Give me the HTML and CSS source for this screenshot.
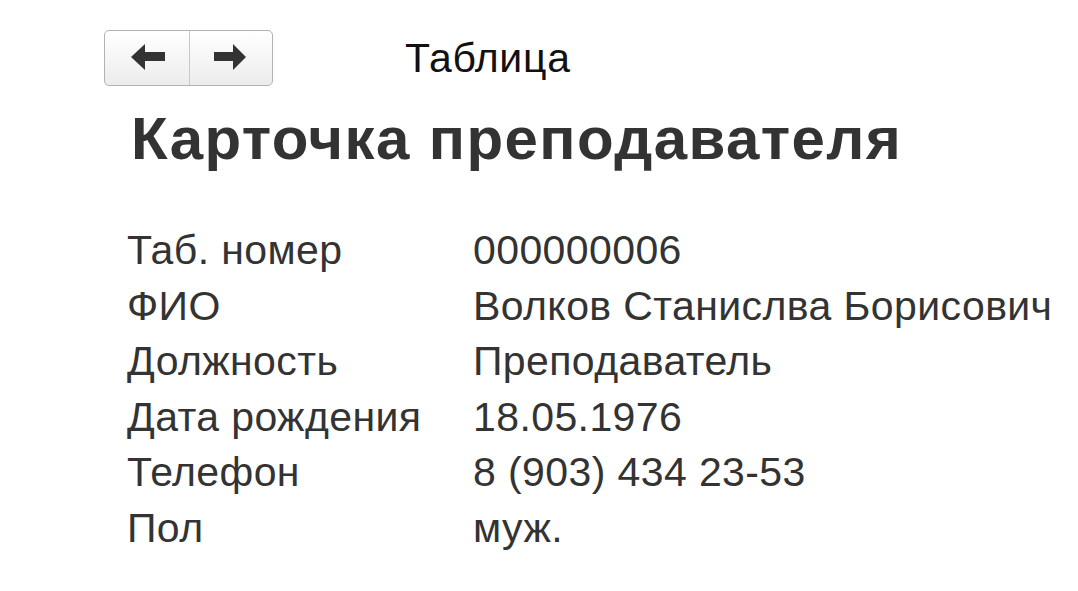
FILE: index.html
```html
<!DOCTYPE html>
<html lang="ru">
<head>
<meta charset="utf-8">
<title>Карточка преподавателя</title>
<link rel="stylesheet" href="styles.css">
</head>
<body>
<div class="page">
  <div class="toolbar">
    <div class="nav-group">
      <button class="nav-btn nav-back" type="button" aria-label="Назад">
        <svg width="34" height="26" viewBox="0 0 34 26"><path d="M0 13 L14 0 L14 8 L34 8 L34 17 L14 17 L14 26 Z" fill="#333"/></svg>
      </button>
      <button class="nav-btn nav-fwd" type="button" aria-label="Вперёд">
        <svg width="32" height="26" viewBox="0 0 32 26"><path d="M32 13 L19 0 L19 8 L0 8 L0 17 L19 17 L19 26 Z" fill="#333"/></svg>
      </button>
    </div>
    <div class="crumb">Таблица</div>
  </div>
  <h1 class="title">Карточка преподавателя</h1>
  <div class="card">
    <div class="label">Таб. номер</div><div class="value">000000006</div>
    <div class="label">ФИО</div><div class="value">Волков Станислва Борисович</div>
    <div class="label">Должность</div><div class="value">Преподаватель</div>
    <div class="label">Дата рождения</div><div class="value">18.05.1976</div>
    <div class="label">Телефон</div><div class="value">8 (903) 434 23-53</div>
    <div class="label">Пол</div><div class="value">муж.</div>
  </div>
</div>
</body>
</html>
```

FILE: styles.css
```css
html, body {
  margin: 0;
  padding: 0;
  background: #ffffff;
}

body {
  font-family: "Liberation Sans", Arial, sans-serif;
  color: #333333;
}

.page {
  padding-top: 30px;
}

.toolbar {
  display: flex;
  align-items: center;
  padding-left: 104px;
  height: 56px;
}

.nav-group {
  display: flex;
  height: 56px;
  box-sizing: border-box;
  border: 1px solid #b2b2b2;
  border-radius: 5px;
  overflow: hidden;
  background: linear-gradient(#ffffff, #ececec);
}

.nav-btn {
  display: flex;
  align-items: center;
  justify-content: center;
  margin: 0;
  padding: 0;
  border: none;
  background: transparent;
  height: 100%;
}

.nav-back {
  width: 85px;
  border-right: 1px solid #c8c8c8;
  padding-left: 1px;
}

.nav-fwd {
  width: 82px;
  padding-right: 3px;
}

.nav-btn svg {
  display: block;
  margin-top: -3px;
}

.crumb {
  margin-left: 132px;
  font-size: 41px;
  line-height: 41px;
  letter-spacing: 0.7px;
  color: #111111;
}

.title {
  margin: 24px 0 0 131px;
  font-size: 60px;
  line-height: 58px;
  letter-spacing: 1.4px;
  font-weight: bold;
  color: #333333;
}

.card {
  display: grid;
  grid-template-columns: 346px auto;
  margin: 55px 0 0 127px;
  font-size: 41px;
  line-height: 55.6px;
  letter-spacing: 0.4px;
  color: #333333;
}

.label, .value {
  white-space: nowrap;
}
```
